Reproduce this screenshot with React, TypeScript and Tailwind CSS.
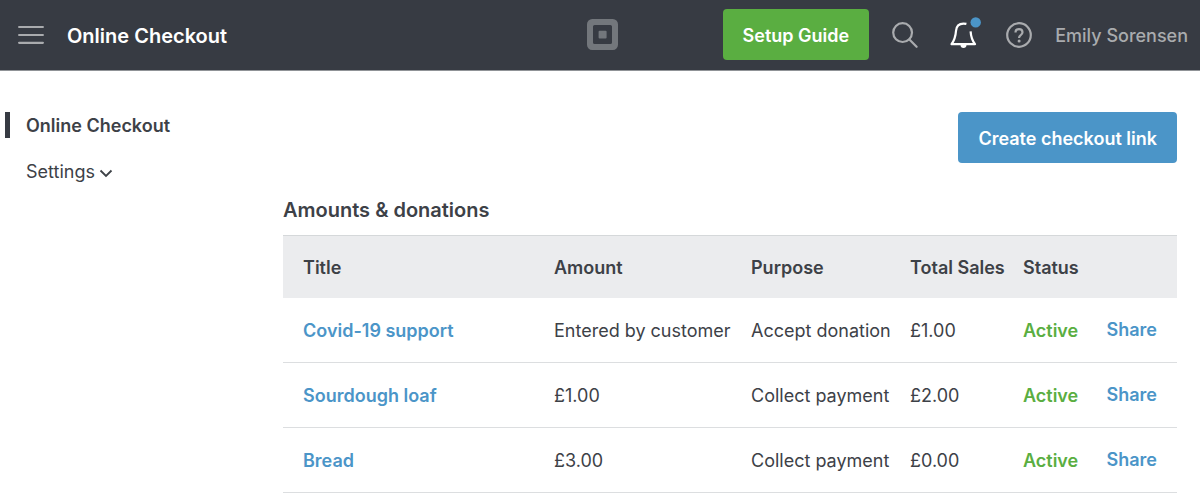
const LINKS = [
  { title: "Covid-19 support", amount: "Entered by customer", purpose: "Accept donation", sales: "£1.00" },
  { title: "Sourdough loaf", amount: "£1.00", purpose: "Collect payment", sales: "£2.00" },
  { title: "Bread", amount: "£3.00", purpose: "Collect payment", sales: "£0.00" },
];

function MenuIcon() {
  return (
    <svg width="28" height="20" viewBox="-2 0 28 20" fill="none" stroke="currentColor" strokeWidth="2.2" strokeLinecap="round">
      <path d="M1.1 2h23.8M1.1 10h23.8M1.1 17.8h23.8" />
    </svg>
  );
}

function Logo() {
  return (
    <svg width="31" height="31" viewBox="0 0 31 31" fill="#73777c" aria-label="Home">
      <path
        fillRule="evenodd"
        d="M5.2 0h20.6A5.2 5.2 0 0 1 31 5.2v20.6a5.2 5.2 0 0 1-5.2 5.2H5.2A5.2 5.2 0 0 1 0 25.8V5.2A5.2 5.2 0 0 1 5.2 0ZM7.6 6A1.6 1.6 0 0 0 6 7.6v15.8A1.6 1.6 0 0 0 7.6 25h15.8a1.6 1.6 0 0 0 1.6-1.6V7.6A1.6 1.6 0 0 0 23.4 6Z"
      />
      <rect x="11.6" y="11.8" width="8" height="7.6" rx="1" />
    </svg>
  );
}

function SearchIcon() {
  return (
    <svg width="26" height="26" viewBox="0 0 26 26" fill="none" stroke="currentColor" strokeWidth="2.2" strokeLinecap="round">
      <circle cx="10.6" cy="10.6" r="9.4" />
      <path d="M17.4 17.4 24.6 24.8" />
    </svg>
  );
}

function BellIcon() {
  return (
    <svg width="34" height="36" viewBox="0 0 34 36" fill="none">
      <path
        d="M17.4 6.900C16.600 6.700 15.600 6.600 14.400 6.600C10 6.600 7.400 9.400 7 13.800C6.600 19.600 5.700 22.800 2.500 27.200H26C23 23.200 21.900 19.400 21.600 14.400"
        stroke="white"
        strokeWidth="2.2"
        strokeLinejoin="round"
      />
      <path d="M11.500 28h6c0 1.800-1.200 3-3 3s-3-1.200-3-3Z" fill="white" />
      <circle cx="26.700" cy="5.400" r="5.200" fill="#4b95c8" />
    </svg>
  );
}

function HelpIcon() {
  return (
    <svg width="26" height="26" viewBox="0 0 26 26" fill="none" stroke="currentColor" strokeWidth="2.2">
      <circle cx="13" cy="13" r="11.8" />
      <path d="M9.500 10.600c0-2.100 1.500-3.500 3.500-3.500s3.500 1.300 3.500 3.200c0 1.700-1 2.400-2 3.100-.9.700-1.400 1.100-1.400 2.300v.4" />
      <circle cx="13.100" cy="18.900" r="1.500" fill="currentColor" stroke="none" />
    </svg>
  );
}

function Header() {
  return (
    <header className="grid grid-cols-[1fr_auto_1fr] items-center border-b border-[#909397] bg-[#373b43] px-3 pb-px pl-4 text-[#a9abae]">
      <div className="flex items-center gap-[23px]">
        <button type="button" aria-label="Menu">
          <MenuIcon />
        </button>
        <h1 className="pt-0.5 text-xl font-semibold text-white">Online Checkout</h1>
      </div>

      <Logo />

      <div className="flex h-[69px] items-center justify-end gap-[23px]">
        <button type="button" className="h-[51px] rounded bg-[#5aae41] px-5 pt-0.5 text-lg font-semibold whitespace-nowrap text-white">
          Setup Guide
        </button>
        <button type="button" aria-label="Search">
          <SearchIcon />
        </button>
        <button type="button" aria-label="Notifications" className="ml-2">
          <BellIcon />
        </button>
        <button type="button" aria-label="Help">
          <HelpIcon />
        </button>
        <a href="#account" className="pt-0.5 text-lg font-medium whitespace-nowrap">
          Emily Sorensen
        </a>
      </div>
    </header>
  );
}

function Sidebar() {
  return (
    <nav className="w-[283px] shrink-0 pt-[41px] pl-[5px]">
      <a href="#checkout" aria-current="page" className="block border-l-[5px] border-[#373b43] pt-0.5 pl-4 text-lg leading-6 font-semibold">
        Online Checkout
      </a>
      <button type="button" className="mt-5 ml-[21px] flex items-center gap-1 pt-0.5 text-lg leading-6">
        Settings
        <svg width="14" height="14" viewBox="0 0 14 14" fill="none" stroke="currentColor" strokeWidth="1.8" className="mt-0.5">
          <path d="M1.500 4.500 7 10l5.500-5.500" />
        </svg>
      </button>
    </nav>
  );
}

export default function App() {
  return (
    <div className="bg-white font-['Inter',sans-serif] text-[#3d4147]">
      <Header />
      <div className="flex">
        <Sidebar />
        <main className="min-w-0 flex-1 pt-[41px] pr-[23px]">
          <div className="flex justify-end">
            <button type="button" className="h-[51px] rounded bg-[#4b95c8] px-5 pt-0.5 text-lg font-semibold text-white">
              Create checkout link
            </button>
          </div>

          <h2 className="mt-8 mb-2.5 text-xl leading-[30px] font-semibold">Amounts &amp; donations</h2>
          <table className="w-full table-fixed border-collapse text-left text-lg whitespace-nowrap">
            <thead>
              <tr className="h-[62px] border-t border-[#d5d8da] bg-[#ebecee]">
                <th className="pt-0.5 pl-5 font-semibold">Title</th>
                <th className="w-[197px] pt-0.5 pl-5 font-semibold">Amount</th>
                <th className="w-[159px] pt-0.5 pl-5 font-semibold">Purpose</th>
                <th className="w-[113px] pt-0.5 pl-5 font-semibold">Total Sales</th>
                <th className="w-[84px] pt-0.5 pl-5 font-semibold">Status</th>
                <th className="w-[90px]" aria-label="Actions" />
              </tr>
            </thead>
            <tbody>
              {LINKS.map(({ title, amount, purpose, sales }) => (
                <tr key={title} className="h-[65px] border-b border-[#dcdee0]">
                  <td className="pt-0.5 pl-5 font-semibold text-[#4b95c8]">
                    <a href="#link">{title}</a>
                  </td>
                  <td className="pt-0.5 pl-5">{amount}</td>
                  <td className="pt-0.5 pl-5">{purpose}</td>
                  <td className="pt-0.5 pl-5">{sales}</td>
                  <td className="pt-0.5 pl-5 font-semibold text-[#5aae41]">Active</td>
                  <td className="pr-5 text-right font-semibold text-[#4b95c8]">
                    <button type="button">Share</button>
                  </td>
                </tr>
              ))}
            </tbody>
          </table>
        </main>
      </div>
    </div>
  );
}
